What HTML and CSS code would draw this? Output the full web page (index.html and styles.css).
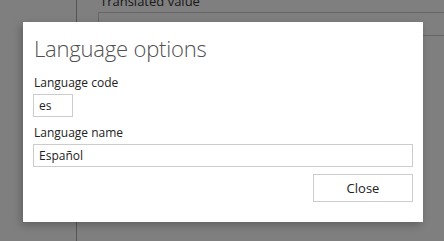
FILE: index.html
```html
<!DOCTYPE html>
<html lang="en">
<head>
    <meta charset="UTF-8">
    <title>Language options</title>
    <link rel="stylesheet" href="styles.css">
</head>
<body>

    <div class="page">
        <div class="sidebar"></div>
        <div class="editor">
            <label class="field-label">Translated value</label>
            <div class="value-box">Lorem ipsum dolor sit amet</div>
        </div>
    </div>

    <div class="overlay">
        <div class="dialog">
            <h1>Language options</h1>

            <label class="label" for="lang-code">Language code</label>
            <input class="input input-code" id="lang-code" type="text" value="es">

            <label class="label" for="lang-name">Language name</label>
            <input class="input input-name" id="lang-name" type="text" value="Español">

            <div class="actions">
                <button class="button">Close</button>
            </div>
        </div>
    </div>

</body>
</html>
```

FILE: styles.css
```css
* {
    margin: 0;
    padding: 0;
    box-sizing: border-box;
}

body {
    font-family: 'Open Sans', 'Noto Sans', sans-serif;
    background-color: #fff;
    color: #333;
    width: 444px;
    height: 241px;
    overflow: hidden;
    position: relative;
}

/* page behind the dialog */
.page {
    display: flex;
    height: 100%;
}

.sidebar {
    width: 77px;
    border-right: 1px solid #aaa;
}

.editor {
    flex: 1;
    padding: 0 0 0 21px;
    margin-top: -8px;
}

.field-label {
    display: block;
    font-size: 13px;
    line-height: 18px;
    padding-left: 2px;
    color: #333;
}

.value-box {
    margin-top: 2px;
    height: 24px;
    border: 1px solid #ccc;
    border-right: none;
    padding: 6px 15px 0 15px;
    font-size: 13px;
    line-height: 16px;
    overflow: hidden;
    color: #333;
}

/* modal */
.overlay {
    position: absolute;
    inset: 0;
    background-color: rgba(0, 0, 0, 0.5);
    padding: 22px 0 0 23px;
}

.dialog {
    width: 400px;
    height: 200px;
    background-color: #fff;
    padding: 10px 10px 0 10px;
    box-shadow: -2px 3px 8px rgba(0, 0, 0, 0.25);
}

h1 {
    font-size: 22px;
    font-weight: 300;
    letter-spacing: -0.2px;
    color: #505050;
    line-height: 32px;
    margin-bottom: 10px;
    padding-left: 1px;
}

.label {
    display: block;
    font-size: 12px;
    line-height: 17px;
    color: #222;
    padding-left: 1px;
    margin-bottom: 3px;
}

.input {
    display: block;
    height: 23px;
    border: 1px solid #ccc;
    padding: 0 5px;
    font-family: inherit;
    font-size: 12px;
    color: #222;
    outline: none;
    margin-bottom: 7px;
}

.input-code {
    width: 40px;
}

.input-name {
    width: 380px;
}

.actions {
    display: flex;
    justify-content: flex-end;
    margin-top: 5px;
}

.button {
    width: 100px;
    height: 28px;
    border: 1px solid #ccc;
    background-color: #fff;
    font-family: inherit;
    font-size: 13px;
    color: #222;
}
```
